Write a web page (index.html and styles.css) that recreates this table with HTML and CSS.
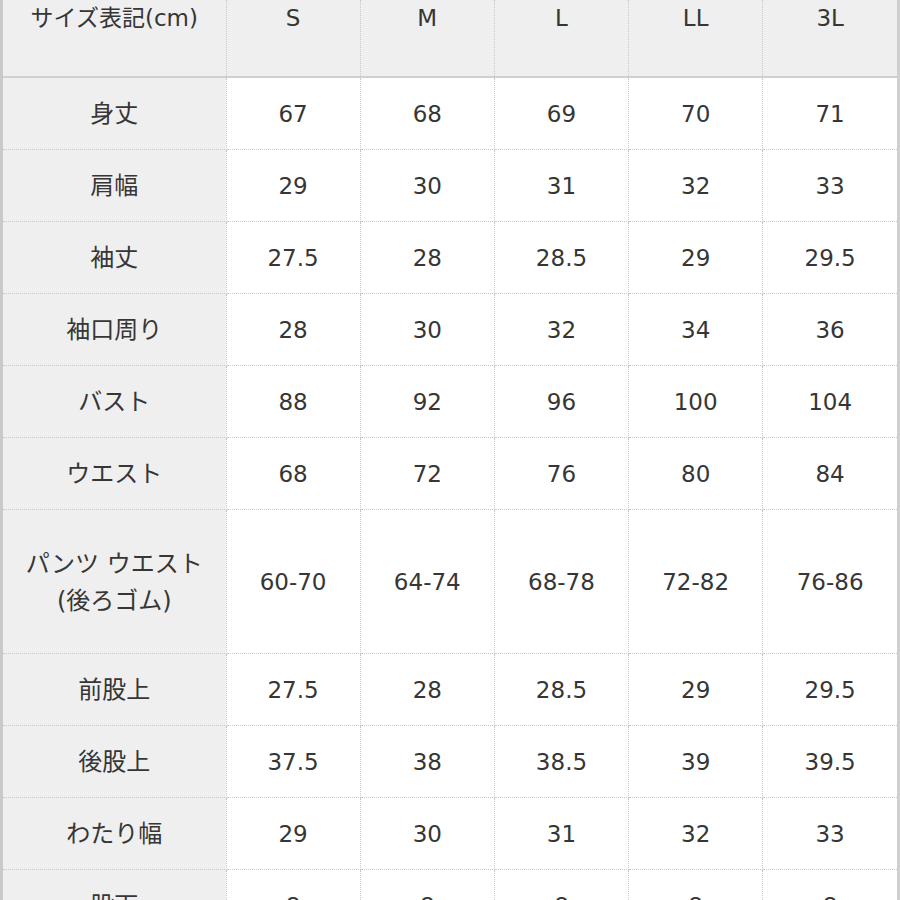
FILE: index.html
```html
<!DOCTYPE html>
<html lang="ja">
<head>
<meta charset="utf-8">
<link rel="stylesheet" href="styles.css">
</head>
<body>
<div class="wrap">
<table class="size">
<colgroup><col class="c-label"><col><col><col><col><col></colgroup>
<thead>
<tr class="head"><th>サイズ表記(cm)</th><th>S</th><th>M</th><th>L</th><th>LL</th><th>3L</th></tr>
</thead>
<tbody>
<tr><th>身丈</th><td>67</td><td>68</td><td>69</td><td>70</td><td>71</td></tr>
<tr><th>肩幅</th><td>29</td><td>30</td><td>31</td><td>32</td><td>33</td></tr>
<tr><th>袖丈</th><td>27.5</td><td>28</td><td>28.5</td><td>29</td><td>29.5</td></tr>
<tr><th>袖口周り</th><td>28</td><td>30</td><td>32</td><td>34</td><td>36</td></tr>
<tr><th>バスト</th><td>88</td><td>92</td><td>96</td><td>100</td><td>104</td></tr>
<tr><th>ウエスト</th><td>68</td><td>72</td><td>76</td><td>80</td><td>84</td></tr>
<tr class="tall"><th>パンツ ウエスト<br>(後ろゴム)</th><td>60-70</td><td>64-74</td><td>68-78</td><td>72-82</td><td>76-86</td></tr>
<tr><th>前股上</th><td>27.5</td><td>28</td><td>28.5</td><td>29</td><td>29.5</td></tr>
<tr><th>後股上</th><td>37.5</td><td>38</td><td>38.5</td><td>39</td><td>39.5</td></tr>
<tr><th>わたり幅</th><td>29</td><td>30</td><td>31</td><td>32</td><td>33</td></tr>
<tr><th>股下</th><td>8</td><td>8</td><td>8</td><td>8</td><td>8</td></tr>
</tbody>
</table>
</div>
</body>
</html>
```
FILE: styles.css
```css
html, body {
  margin: 0;
  padding: 0;
  background: #ffffff;
}
body {
  width: 900px;
  height: 900px;
  overflow: hidden;
}
.wrap {
  width: 894px;
  border-left: 3px solid #c9c9c9;
  border-right: 3px solid #cfcfcf;
}
.size {
  width: 894px;
  table-layout: fixed;
  border-collapse: collapse;
  font-family: "DejaVu Sans", "Noto Sans CJK JP", sans-serif;
  font-size: 23px;
  color: #363636;
}
.c-label {
  width: 223px;
}
.size th,
.size td {
  font-weight: normal;
  text-align: center;
  vertical-align: middle;
  padding: 2px 0 0 0;
  height: 69px;
  border: 1px dotted #c8c8c8;
  line-height: 37px;
}
.size th {
  font-size: 24px;
}
.size tr > :first-child {
  border-left: none;
}
.size tr > :last-child {
  border-right: none;
}
.size tbody th {
  background: #efefef;
}
.size td {
  background: #ffffff;
}
.head th {
  background: #efefef;
  height: 76px;
  padding: 0;
  vertical-align: top;
  line-height: 36px;
  font-size: 23px;
  border-top: none;
  border-bottom: 2px solid #d0d0d0;
}
.tall th,
.tall td {
  height: 141px;
}
```
